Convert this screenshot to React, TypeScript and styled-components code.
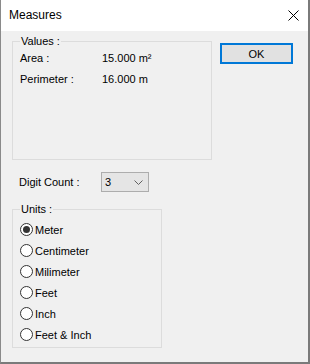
import styled, { createGlobalStyle } from 'styled-components';

const GlobalStyle = createGlobalStyle`
  html, body {
    margin: 0;
    padding: 0;
    background: #f0f0f0;
  }
  * {
    box-sizing: border-box;
  }
`;

const Window = styled.div`
  width: 310px;
  height: 364px;
  background-color: #f0f0f0;
  border-left: 1px solid #8a8a8a;
  border-right: 2px solid #7a7a7a;
  border-bottom: 2px solid #7a7a7a;
  font-family: 'Liberation Sans', Arial, sans-serif;
  font-size: 11px;
  color: #000000;
  display: flex;
  flex-direction: column;
`;

const TitleBar = styled.div`
  height: 31px;
  flex-shrink: 0;
  background-color: #ffffff;
  display: flex;
  align-items: center;
  justify-content: space-between;
  padding: 0 9px 1px 8px;
`;

const Title = styled.span`
  font-size: 12px;
  color: #000000;
`;

const CloseBtn = styled.button`
  border: none;
  background: transparent;
  padding: 0;
  width: 12px;
  height: 12px;
  display: flex;
  align-items: center;
  justify-content: center;
  margin-top: 1px;
`;

const Body = styled.div`
  padding: 4px 0 0 11px;
  display: flex;
  flex-direction: column;
`;

const TopRow = styled.div`
  display: flex;
  align-items: flex-start;
  gap: 8px;
`;

const Group = styled.fieldset<{ $w: number; $h: number }>`
  margin: 0;
  width: ${(p) => p.$w}px;
  height: ${(p) => p.$h}px;
  border: 1px solid #dcdcdc;
  padding: 0 0 0 7px;
  min-inline-size: 0;
`;

const Legend = styled.legend`
  padding: 0 1px;
  line-height: 12px;
  font-size: 11px;
`;

const ValueGrid = styled.div`
  display: grid;
  grid-template-columns: 82px auto;
  grid-auto-rows: 21px;
  margin-top: 5px;
  line-height: 13px;
`;

const OkButton = styled.button`
  margin-top: 8px;
  width: 73px;
  height: 21px;
  background-color: #e1e1e1;
  border: 2px solid #0078d7;
  font-family: 'Liberation Sans', Arial, sans-serif;
  font-size: 11px;
  color: #000000;
  padding: 0;
`;

const DigitRow = styled.div`
  display: flex;
  align-items: center;
  margin: 12px 0 11px 7px;
  height: 20px;
`;

const DigitLabel = styled.span`
  width: 82px;
`;

const Combo = styled.div`
  width: 48px;
  height: 20px;
  border: 1px solid #adadad;
  background-color: #e5e5e5;
  display: flex;
  align-items: center;
  justify-content: space-between;
  padding: 0 5px 0 3px;
`;

const RadioList = styled.div`
  display: flex;
  flex-direction: column;
  margin-top: 4px;
`;

const RadioRow = styled.label`
  height: 21px;
  display: flex;
  align-items: center;
  gap: 2px;
`;

const RadioCircle = styled.span<{ $on: boolean }>`
  width: 13px;
  height: 13px;
  border-radius: 50%;
  border: 1px solid #333333;
  background-color: #ffffff;
  display: flex;
  align-items: center;
  justify-content: center;
  &::after {
    content: '';
    width: 7px;
    height: 7px;
    border-radius: 50%;
    background-color: #333333;
    display: ${(p) => (p.$on ? 'block' : 'none')};
  }
`;

const units = ['Meter', 'Centimeter', 'Milimeter', 'Feet', 'Inch', 'Feet & Inch'];

const App = () => {
  return (
    <>
      <GlobalStyle />
      <Window>
        <TitleBar>
          <Title>Measures</Title>
          <CloseBtn aria-label="Close">
            <svg width="11" height="11" viewBox="0 0 11 11">
              <path d="M0.5 0.5 L10.5 10.5 M10.5 0.5 L0.5 10.5" stroke="#000" strokeWidth="1" />
            </svg>
          </CloseBtn>
        </TitleBar>
        <Body>
          <TopRow>
            <Group $w={200} $h={125}>
              <Legend>Values :</Legend>
              <ValueGrid>
                <span>Area :</span>
                <span>15.000 m²</span>
                <span>Perimeter :</span>
                <span>16.000 m</span>
              </ValueGrid>
            </Group>
            <OkButton>OK</OkButton>
          </TopRow>
          <DigitRow>
            <DigitLabel>Digit Count :</DigitLabel>
            <Combo>
              <span>3</span>
              <svg width="9" height="5" viewBox="0 0 9 5">
                <path d="M0.5 0.5 L4.5 4.5 L8.5 0.5" fill="none" stroke="#606060" strokeWidth="1" />
              </svg>
            </Combo>
          </DigitRow>
          <Group $w={150} $h={145}>
            <Legend>Units :</Legend>
            <RadioList>
              {units.map((u, i) => (
                <RadioRow key={u}>
                  <RadioCircle $on={i === 0} />
                  <span>{u}</span>
                </RadioRow>
              ))}
            </RadioList>
          </Group>
        </Body>
      </Window>
    </>
  );
};

export default App;
